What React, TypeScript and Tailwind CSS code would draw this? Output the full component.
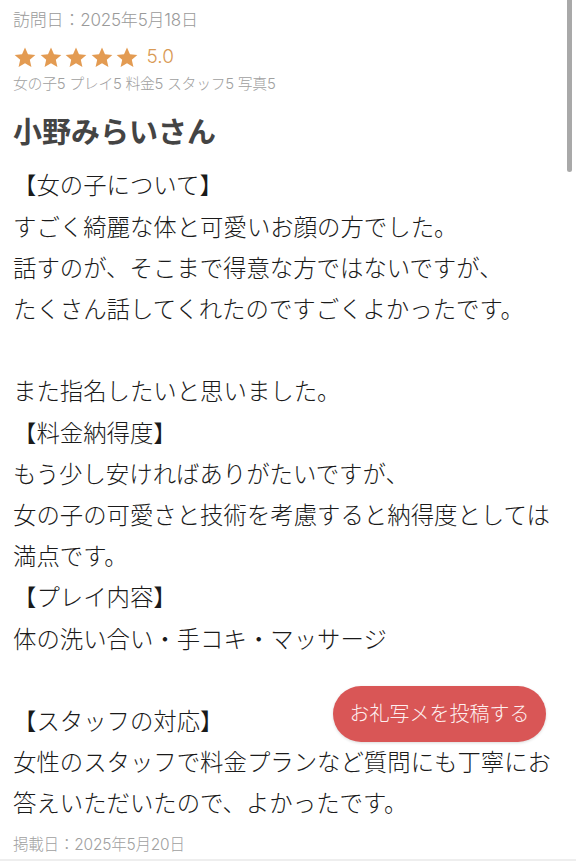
import React from "react";

const Star = () => (
  <svg width="24" height="23" viewBox="0 0 24 24" className="shrink-0">
    <path
      d="M12 1.5l3.1 7.1 7.7.7-5.8 5.1 1.7 7.6L12 18.1 5.3 22l1.7-7.6L1.2 9.3l7.7-.7z"
      fill="#e39b52"
    />
  </svg>
);

const body = `【女の子について】
すごく綺麗な体と可愛いお顔の方でした。
話すのが、そこまで得意な方ではないですが、
たくさん話してくれたのですごくよかったです。

また指名したいと思いました。
【料金納得度】
もう少し安ければありがたいですが、
女の子の可愛さと技術を考慮すると納得度としては満点です。
【プレイ内容】
体の洗い合い・手コキ・マッサージ

【スタッフの対応】
女性のスタッフで料金プランなど質問にも丁寧にお答えいただいたので、よかったです。`;

export default function App() {
  return (
    <div
      className="relative w-[576px] h-[861px] overflow-hidden bg-white"
      style={{ fontFamily: 'Inter, "Noto Sans CJK JP", sans-serif' }}
    >
      <div className="pl-[13px] pr-[20px]">
        <div className="pt-[8px] text-[17px] leading-[24px] font-light text-[#9a9a9a] tracking-[-0.2px]">
          訪問日：2025年5月18日
        </div>
        <div className="mt-[12px] flex items-center gap-[1.5px] h-[26px]">
          <Star />
          <Star />
          <Star />
          <Star />
          <Star />
          <span className="ml-[6px] text-[19px] leading-[26px] font-light text-[#d99a55]">5.0</span>
        </div>
        <div className="mt-[4px] text-[14.9px] leading-[20px] font-light text-[#a0a0a0] tracking-[-0.3px]">
          女の子5 プレイ5 料金5 スタッフ5 写真5
        </div>
        <div className="mt-[20px] text-[29px] leading-[38px] font-bold text-[#444444]">
          小野みらいさん
        </div>
        <div className="mt-[13.4px] text-[23.4px] leading-[41.2px] font-light text-[#1a1a1a] whitespace-pre-line">
          {body}
        </div>
        <div className="mt-[9.4px] text-[15.5px] leading-[22px] font-light text-[#a0a0a0] tracking-[-0.2px]">
          掲載日：2025年5月20日
        </div>
      </div>

      <div className="absolute left-0 right-0 bottom-0 h-[2px] bg-[#eeeeee]" />

      <div className="absolute right-[4px] top-0 w-[5px] h-[172px] rounded-b-full bg-[#a9a9a9]" />

      <button
        className="absolute left-[333px] top-[686px] w-[213px] h-[56px] rounded-full bg-[#d95656] text-[20px] font-light text-[#fdf0f0] shadow-[0_1px_3px_rgba(0,0,0,0.15)]"
      >
        お礼写メを投稿する
      </button>
    </div>
  );
}
